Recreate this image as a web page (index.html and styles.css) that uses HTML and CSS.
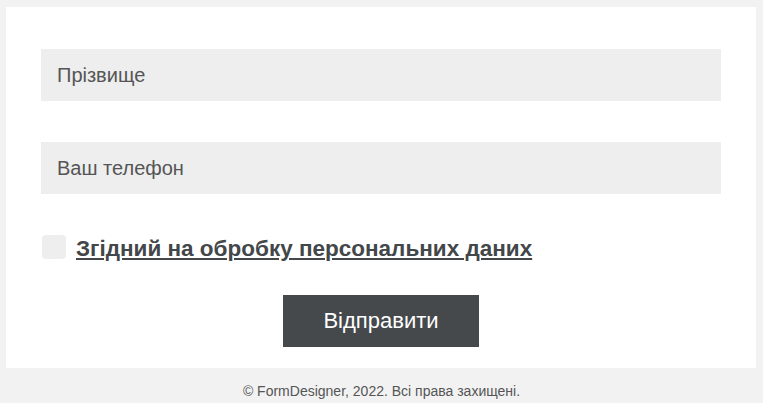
FILE: index.html
```html
<!DOCTYPE html>
<html lang="uk">
<head>
<meta charset="utf-8">
<title>Form</title>
<link rel="stylesheet" href="styles.css">
</head>
<body>
<form class="card">
  <input class="field" type="text" placeholder="Прізвище">
  <input class="field" type="tel" placeholder="Ваш телефон">
  <label class="agree">
    <span class="box"></span>
    <a class="agree-link" href="#">Згідний на обробку персональних даних</a>
  </label>
  <div class="actions">
    <button class="submit" type="button">Відправити</button>
  </div>
</form>
<footer class="footer">© FormDesigner, 2022. Всі права захищені.</footer>
</body>
</html>
```
FILE: styles.css
```css
html, body {
  margin: 0;
  padding: 0;
  background: #f2f2f2;
  font-family: "Liberation Sans", Arial, sans-serif;
}
.card {
  background: #ffffff;
  margin: 7px 7px 0 6px;
  padding: 42px 35px 21px 35px;
  display: flex;
  flex-direction: column;
  gap: 41px;
}
.field {
  display: block;
  box-sizing: border-box;
  width: 100%;
  height: 52px;
  border: none;
  outline: none;
  background: #eeeeee;
  padding: 0 16px;
  font-family: "Liberation Sans", Arial, sans-serif;
  font-size: 20px;
  color: #555555;
}
.field::placeholder {
  color: #555555;
  opacity: 1;
}
.agree {
  display: flex;
  align-items: center;
  gap: 10px;
  height: 24px;
  padding-left: 1px;
  line-height: 24px;
}
.box {
  width: 24px;
  height: 24px;
  border-radius: 4px;
  background: #eeeeee;
  flex: none;
}
.agree-link {
  font-size: 22.5px;
  font-weight: bold;
  color: #43474a;
  text-decoration: underline;
  text-underline-offset: 2px;
  text-decoration-thickness: 2px;
  padding-top: 4px;
}
.actions {
  display: flex;
  justify-content: center;
  margin-top: -5px;
}
.submit {
  width: 196px;
  height: 52px;
  border: none;
  background: #45494c;
  color: #ffffff;
  font-family: "Liberation Sans", Arial, sans-serif;
  font-size: 22px;
  padding: 0;
}
.footer {
  text-align: center;
  font-size: 14px;
  color: #555555;
  padding-top: 15px;
}
```
